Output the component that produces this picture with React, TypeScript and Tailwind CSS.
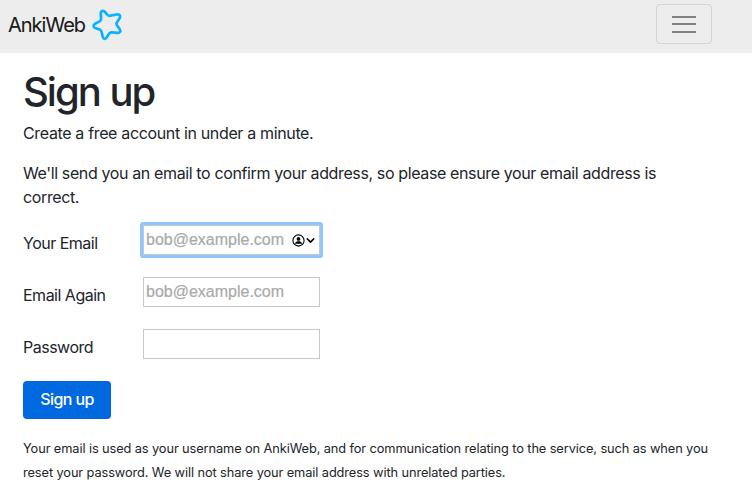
import { ChevronDown } from 'lucide-react'

const fields = [
  { id: 'email', label: 'Your Email', type: 'email', placeholder: 'bob@example.com', active: true },
  { id: 'email2', label: 'Email Again', type: 'email', placeholder: 'bob@example.com', active: false },
  { id: 'password', label: 'Password', type: 'password', placeholder: '', active: false },
]

function StarLogo() {
  return (
    <svg width="34" height="34" viewBox="0 0 34 34" fill="none" stroke="#0ab4fc" strokeWidth="2.7" strokeLinejoin="round">
      <path d="M10.1 10.5 L9.8 5.6 C9.6 2.7 12.3 1.9 14 4 L16.4 6.8 Q17.5 8 19.3 7.7 L25.8 6.5 C28.6 6 29.9 7.9 28.5 10.4 L25.8 14.6 Q24.9 16 25.9 17.3 L28.6 20.9 C30.2 23.2 29 25.1 26.4 24.8 L21 24.3 Q19.2 24.1 18.1 25.6 L15.8 29.3 C14.3 31.6 12.2 31.2 11.7 28.7 L10.6 24 Q10.2 22.2 8.5 21.6 L4.2 20.1 C2 19.2 2 16.8 4.1 15.7 L8.5 13.4 Q10.2 12.4 10.1 10.5 Z" />
    </svg>
  )
}

function Navbar() {
  return (
    <nav className="h-[53px] bg-[#ededed] flex items-start justify-between pl-2 pr-10">
      <a href="#" className="flex items-center h-[50px] text-black/90">
        <span className="w-[83px] text-xl tracking-[-1px] whitespace-nowrap [-webkit-text-stroke:0.15px]">AnkiWeb</span>
        <StarLogo />
      </a>
      <button aria-label="Menu" className="mt-1 w-14 h-10 rounded border border-black/10 flex flex-col items-center justify-center gap-[5.5px]">
        <span className="w-6 h-[2px] bg-[#808080]" />
        <span className="w-6 h-[2px] bg-[#808080]" />
        <span className="w-6 h-[2px] bg-[#808080]" />
      </button>
    </nav>
  )
}

function AutofillIcon() {
  return (
    <span className="absolute right-[3px] top-0 h-full flex items-center text-black">
      <svg width="13" height="13" viewBox="0 0 13 13">
        <circle cx="6.5" cy="6.5" r="5.6" fill="none" stroke="currentColor" strokeWidth="1.1" />
        <circle cx="6.5" cy="4.9" r="1.9" fill="currentColor" />
        <path d="M2.9 9.7 C3.3 7.5 5 7.2 6.5 7.2 S9.7 7.5 10.1 9.7 Z" fill="currentColor" />
      </svg>
      <ChevronDown size={13} strokeWidth={2.7} className="-ml-px" />
    </span>
  )
}

export default function App() {
  return (
    <div className="h-[495px] overflow-hidden bg-white font-['Inter',sans-serif] text-[#212529]">
      <Navbar />
      <main className="pt-[15px] px-[23px] text-base">
        <h1 className="text-[40px] leading-[48px] font-medium tracking-[-2px] [word-spacing:1px] mb-[5px]">Sign up</h1>
        <p className="mb-4 tracking-[-0.35px]">Create a free account in under a minute.</p>
        <p className="mb-4 tracking-[-0.375px]">
          We'll send you an email to confirm your address, so please ensure your email address is
          <br />
          correct.
        </p>
        <form>
          {fields.map((f) => (
            <div key={f.id} className="flex h-[52px]">
              <label htmlFor={f.id} className="w-[120px] pt-[6px] tracking-[-0.5px]">{f.label}</label>
              <div className="relative w-[177px] h-[30px]">
                <input
                  id={f.id}
                  type={f.type}
                  placeholder={f.placeholder}
                  className={`block w-full h-full border border-[#c8c8c8] bg-white px-[2px] font-['Liberation_Sans',sans-serif] placeholder:text-[#a9a9a9] [-webkit-text-stroke:0.2px] outline-none ${f.active ? 'rounded-[1px] shadow-[0_0_0_3px_#91c5ff]' : ''}`}
                />
                {f.active && <AutofillIcon />}
              </div>
            </div>
          ))}
          <button type="button" className="block w-[88px] h-[38px] pb-0.5 rounded bg-[#0069e0] text-white font-medium tracking-[-0.6px]">Sign up</button>
        </form>
        <p className="mt-[18px] text-[12.8px] leading-6 tracking-[-0.1px] whitespace-nowrap">
          Your email is used as your username on AnkiWeb, and for communication relating to the service, such as when you
          <br />
          reset your password. We will not share your email address with unrelated parties.
        </p>
      </main>
    </div>
  )
}
